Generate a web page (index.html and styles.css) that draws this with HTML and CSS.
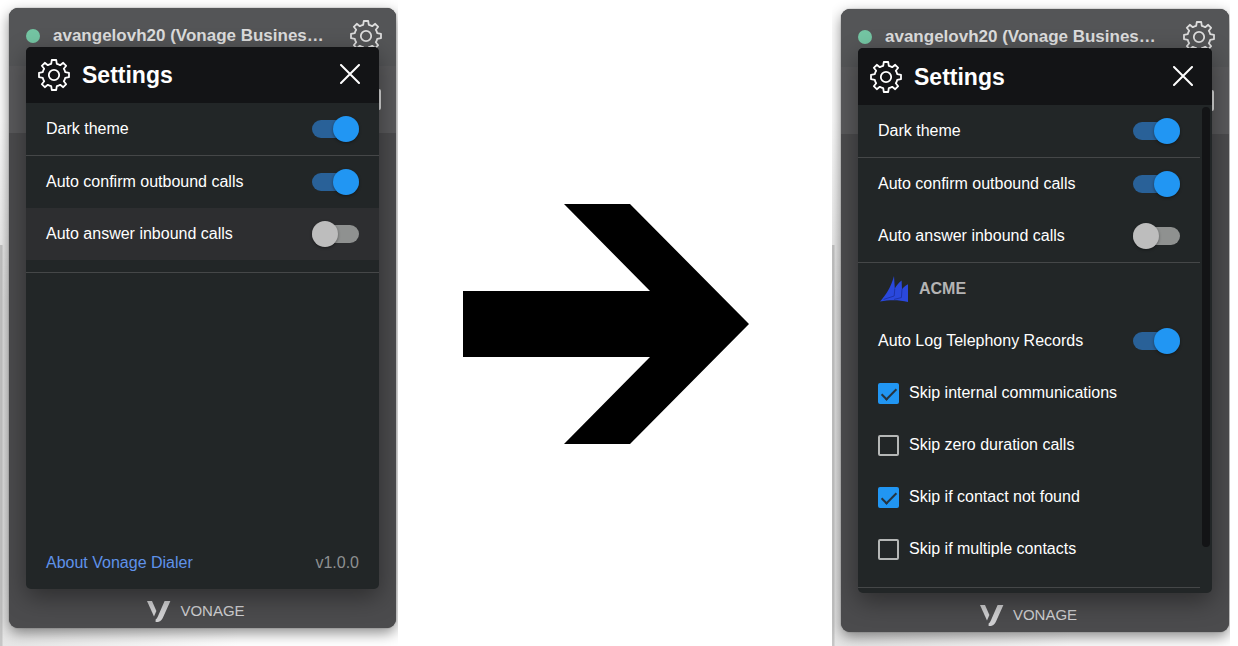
FILE: index.html
```
<!DOCTYPE html>
<html lang="en">
<head>
<meta charset="utf-8">
<title>Vonage Dialer settings</title>
<link rel="stylesheet" href="styles.css">
</head>
<body>
<svg class="defs" aria-hidden="true">
  <symbol id="gear" viewBox="0 0 32 32">
    <path d="M13.8 1H18.2L18.8 4.8C20 5 21 5.4 22.2 6.2L25.2 3.8L28.2 6.8L25.8 9.8C26.6 11 27 12 27.2 13.2L31 13.8V18.2L27.2 18.8C27 20 26.6 21 25.8 22.2L28.2 25.2L25.2 28.2L22.2 25.8C21 26.6 20 27 18.8 27.2L18.2 31H13.8L13.2 27.2C12 27 11 26.6 9.8 25.8L6.8 28.2L3.8 25.2L6.2 22.2C5.4 21 5 20 4.8 18.8L1 18.2V13.8L4.8 13.2C5 12 5.4 11 6.2 9.8L3.8 6.8L6.8 3.8L9.8 6.2C11 5.4 12 5 13.2 4.8Z" fill="none" stroke="currentColor" stroke-width="1.8" stroke-linejoin="round"/>
    <circle cx="16" cy="16" r="5.2" fill="none" stroke="currentColor" stroke-width="1.8"/>
  </symbol>
  <symbol id="close" viewBox="0 0 20 20">
    <path d="M1 1L19 19M19 1L1 19" fill="none" stroke="currentColor" stroke-width="2" stroke-linecap="round"/>
  </symbol>
  <symbol id="vonage" viewBox="0 0 24 21">
    <path d="M0 0H5L9.4 10L7 15.4Z" fill="currentColor"/>
    <path d="M17.6 0H23.4L16 16.4C14.2 20 12.4 21 8.6 21V18.6C10 18 10.8 15.6 11.6 13.8Z" fill="currentColor"/>
  </symbol>
  <symbol id="sails" viewBox="0 0 28 26">
    <path d="M14 0C11 11 6 19 0 25.6C10 23.6 19 23.8 28 26V8.2C25.4 9.4 23.6 11 22 13.2L21.6 4.6C18.6 7 16.6 9.6 14.8 12.6Z" fill="#2a48dc"/>
    <path d="M14.8 12.6L14.2 20L3.6 23.4M22 13.2L21.4 21.6L14 23.4" fill="none" stroke="#1b2f9c" stroke-width="0.8"/>
  </symbol>
</svg>

<main class="compare">
  <section class="shot shot-before">
    <div class="device">
      <div class="app">
        <header class="app-bar">
          <span class="status"></span>
          <span class="user">avangelovh20 (Vonage Busines…</span>
          <svg class="gear"><use href="#gear"/></svg>
        </header>
        <div class="app-tools"><span class="tool"></span></div>
        <footer class="brand"><svg class="brand-mark"><use href="#vonage"/></svg><span>VONAGE</span></footer>
      </div>
      <div class="dialog" role="dialog" aria-label="Settings">
        <header class="dialog-bar">
          <svg class="gear"><use href="#gear"/></svg>
          <h2 class="title">Settings</h2>
          <button class="close" type="button" aria-label="Close"><svg class="close-icon"><use href="#close"/></svg></button>
        </header>
        <div class="dialog-body">
          <div class="list">
            <label class="row">Dark theme<input class="switch" type="checkbox" checked></label>
            <hr class="rule">
            <label class="row">Auto confirm outbound calls<input class="switch" type="checkbox" checked></label>
            <label class="row row-hover">Auto answer inbound calls<input class="switch" type="checkbox"></label>
            <hr class="rule rule-spaced">
            <div class="about"><a class="about-link" href="#about">About Vonage Dialer</a><span class="version">v1.0.0</span></div>
          </div>
        </div>
      </div>
    </div>
  </section>

  <div class="middle">
    <svg class="arrow" viewBox="0 0 286 240" role="img" aria-label="Becomes"><path d="M0 87H187L101 0H167L286 120L167 240H101L187 153H0Z"/></svg>
  </div>

  <section class="shot shot-after">
    <div class="device">
      <div class="app">
        <header class="app-bar">
          <span class="status"></span>
          <span class="user">avangelovh20 (Vonage Busines…</span>
          <svg class="gear"><use href="#gear"/></svg>
        </header>
        <div class="app-tools"><span class="tool"></span></div>
        <footer class="brand"><svg class="brand-mark"><use href="#vonage"/></svg><span>VONAGE</span></footer>
      </div>
      <div class="dialog" role="dialog" aria-label="Settings">
        <header class="dialog-bar">
          <svg class="gear"><use href="#gear"/></svg>
          <h2 class="title">Settings</h2>
          <button class="close" type="button" aria-label="Close"><svg class="close-icon"><use href="#close"/></svg></button>
        </header>
        <div class="dialog-body">
          <div class="list">
            <label class="row">Dark theme<input class="switch" type="checkbox" checked></label>
            <hr class="rule">
            <label class="row">Auto confirm outbound calls<input class="switch" type="checkbox" checked></label>
            <label class="row">Auto answer inbound calls<input class="switch" type="checkbox"></label>
            <hr class="rule">
            <h3 class="group"><svg class="sails"><use href="#sails"/></svg>ACME</h3>
            <label class="row">Auto Log Telephony Records<input class="switch" type="checkbox" checked></label>
            <label class="row row-check"><input class="tick" type="checkbox" checked>Skip internal communications</label>
            <label class="row row-check"><input class="tick" type="checkbox">Skip zero duration calls</label>
            <label class="row row-check"><input class="tick" type="checkbox" checked>Skip if contact not found</label>
            <label class="row row-check"><input class="tick" type="checkbox">Skip if multiple contacts</label>
            <hr class="rule rule-spaced">
          </div>
          <div class="scrollbar"><div class="thumb"></div></div>
        </div>
      </div>
    </div>
  </section>
</main>
</body>
</html>
```

FILE: styles.css
```
* { box-sizing: border-box; }

body {
  margin: 0;
  background: #fff;
  color: #fff;
  font: 16px/20px "Liberation Sans", Arial, sans-serif;
}

.defs { display: none; }

.compare {
  display: grid;
  grid-template-columns: 398fr 434fr 398fr;
  min-height: 100vh;
  padding-right: 8px;
}

.shot {
  display: grid;
  overflow: hidden;
  background:
    linear-gradient(to right, #c6c6c6 2px, transparent 3px) 0 245px / 3px 100% no-repeat,
    linear-gradient(to bottom, #fff 120px, transparent 300px),
    linear-gradient(to right, #e6e6e6, #fff 60%);
}
.shot-before { padding: 8px 2px 18px 9px; }
.shot-after { padding: 9px 1px 14px 9px; }

/* The app and the dialog share one cell, the dialog on top. */
.device {
  display: grid;
  border-radius: 9px;
  background: #4b4b4d;
  box-shadow: 0 0 1px #333, 0 5px 14px rgba(0, 0, 0, 0.45);
}
.app, .dialog { grid-area: 1 / 1; min-width: 0; }

.app {
  display: flex;
  flex-direction: column;
  overflow: hidden;
  border-radius: 9px;
}
.app-bar {
  display: flex;
  align-items: center;
  height: 58px;
  padding: 0 14px 2px 17px;
  background: #545557;
  color: #dcdcdc;
}
.status {
  width: 14px;
  height: 14px;
  margin-right: 13px;
  border-radius: 50%;
  background: #74c5a3;
}
.user {
  flex: 1;
  overflow: hidden;
  font-size: 17px;
  font-weight: 700;
  white-space: nowrap;
}
.gear { flex: none; width: 32px; height: 32px; }

.app-tools {
  display: flex;
  align-items: center;
  justify-content: flex-end;
  height: 67px;
  padding-right: 15px;
  background: #59595b;
}
.tool {
  width: 20px;
  height: 21px;
  border: 2px solid #dcdcdc;
  border-radius: 2px;
}

.brand {
  display: flex;
  align-items: center;
  justify-content: center;
  gap: 9px;
  height: 34px;
  margin-top: auto;
  padding-right: 13px;
  color: #d0d0d2;
  font-size: 15px;
}
.brand-mark { width: 24px; height: 21px; }

.dialog {
  z-index: 1;
  display: flex;
  flex-direction: column;
  overflow: hidden;
  margin: 39px 17px;
  border-radius: 5px;
  background: #222627;
  box-shadow: 0 8px 24px rgba(0, 0, 0, 0.4);
}
.dialog-bar {
  display: flex;
  flex: none;
  align-items: center;
  height: 56px;
  padding: 0 19px 0 12px;
  background: #131416;
}
.shot-after .dialog-bar { height: 57px; }
.title {
  flex: 1;
  margin: 0 0 0 12px;
  font-size: 23px;
  line-height: 28px;
}
.close {
  display: flex;
  padding: 0 0 2px;
  border: 0;
  background: none;
  color: #fff;
}
.close-icon { width: 20px; height: 20px; }

.dialog-body { display: flex; flex: 1; min-height: 0; }
.list { display: flex; flex: 1; flex-direction: column; min-width: 0; }

.row {
  display: flex;
  flex: none;
  align-items: center;
  justify-content: space-between;
  height: 52px;
  padding: 0 20px;
}
.row-hover { background: #2d2e30; }
.row-check { justify-content: flex-start; gap: 10px; }

.rule {
  flex: none;
  width: 100%;
  height: 1px;
  margin: 0;
  border: 0;
  background: #454748;
}
.rule-spaced { margin-top: 12px; }

.switch {
  display: flex;
  align-items: center;
  appearance: none;
  width: 47px;
  height: 18px;
  margin: 0;
  border-radius: 9px;
  background: #8f9190;
}
.switch::before {
  content: "";
  width: 26px;
  height: 26px;
  flex: none;
  border-radius: 50%;
  background: #bdbdbd;
  box-shadow: 0 1px 3px rgba(0, 0, 0, 0.4);
}
.switch:checked { justify-content: flex-end; background: #296198; }
.switch:checked::before { background: #2196f3; }

.tick {
  display: grid;
  place-items: center;
  appearance: none;
  width: 21px;
  height: 21px;
  margin: 0;
  border: 2px solid #b5b7b6;
  border-radius: 2px;
}
.tick:checked { border-color: #2196f3; background: #2196f3; }
.tick:checked::before {
  content: "";
  width: 6px;
  height: 13px;
  margin-bottom: 4px;
  border: solid #26343f;
  border-width: 0 2px 2px 0;
  transform: rotate(45deg);
}

.group {
  display: flex;
  align-items: center;
  gap: 11px;
  height: 52px;
  margin: 0;
  padding: 0 22px;
  color: #b4b4b4;
  font-size: 16px;
}
.sails { width: 28px; height: 26px; }

.about {
  display: flex;
  justify-content: space-between;
  margin-top: auto;
  padding: 16px 20px;
}
.about-link { color: #5f92ea; text-decoration: none; }
.version { color: #8e9091; }

.scrollbar { width: 12px; padding: 2px; }
.thumb { height: 91%; border-radius: 4px; background: #131416; }

.middle { display: flex; align-items: center; padding: 2px 83px 0 65px; }
.arrow { width: 100%; }
```
